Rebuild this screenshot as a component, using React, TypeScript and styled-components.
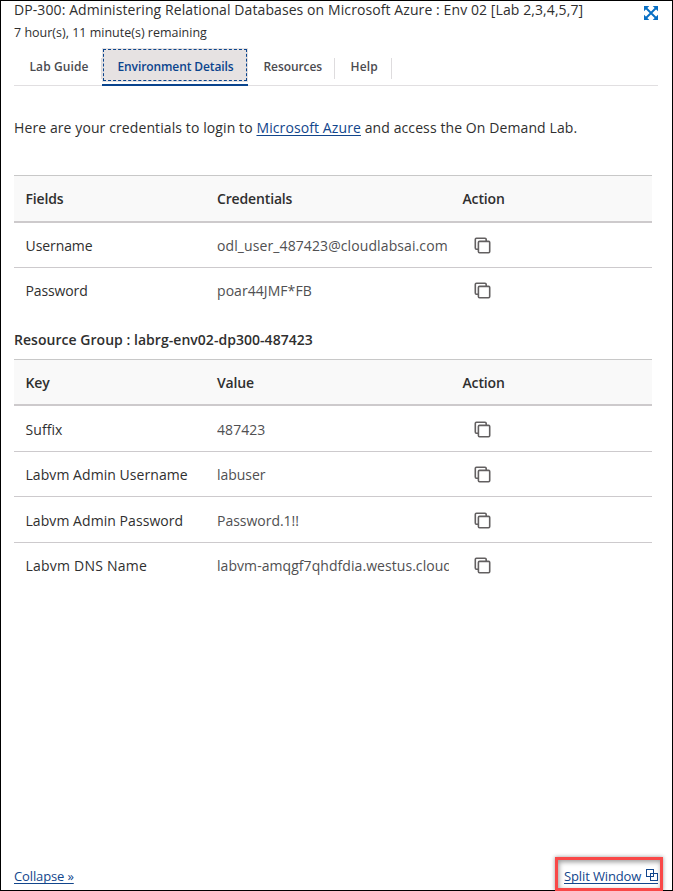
import React from "react";
import styled, { createGlobalStyle, css } from "styled-components";

const GlobalStyle = createGlobalStyle`
  *, *::before, *::after { box-sizing: border-box; }
  body { margin: 0; background: #fff; }
`;

const Frame = styled.div`
  display: flex;
  flex-direction: column;
  width: 673px;
  height: 891px;
  padding: 0 14px 0 13px;
  border: 1px solid #000;
  background: #fff;
  color: #2f2f2f;
  font-family: "Open Sans", "Segoe UI", sans-serif;
  font-size: 14px;
  letter-spacing: 0.09px;
  white-space: nowrap;
`;

const Header = styled.header`
  display: flex;
  justify-content: space-between;
  height: 47px;
`;

const Title = styled.h1`
  margin: 0;
  font-size: 14px;
  font-weight: 400;
  line-height: 18px;
`;

const Remaining = styled.p`
  margin: 5px 0 0;
  font-size: 12.5px;
  line-height: 17px;
  letter-spacing: 0;
`;

const ExpandButton = styled.button`
  align-self: flex-start;
  width: 16px;
  height: 16px;
  margin: 4px -1px 0 0;
  padding: 0;
  border: 0;
  background: none;
  svg { display: block; }
`;

const Tabs = styled.nav`
  display: flex;
  height: 38px;
  box-shadow: inset 0 -1px #e1dfe1;
`;

const Tab = styled.button<{ $width: number; $spacing: number; $active?: boolean }>`
  display: flex;
  flex: none;
  align-items: flex-start;
  width: ${(p) => p.$width}px;
  height: 38px;
  padding: 10px 0 0 15.5px;
  border: 0;
  background: linear-gradient(#dedcde, #dedcde) right 10px / 1px 21px no-repeat;
  color: #4b4b50;
  font: 600 12px/17px "Open Sans", sans-serif;
  letter-spacing: ${(p) => p.$spacing}px;
  ${(p) =>
    p.$active &&
    css`
      padding: 0;
      background: none;
      border-bottom: 2px solid #0a448d;
      color: #0a448d;
    `}
`;

const FocusedLabel = styled.span`
  width: 146px;
  height: 34px;
  padding: 10px 0 0 15.5px;
  background: #e6e2e2;
  outline: 1px dashed #0a448d;
  outline-offset: -2px;
  text-align: left;
`;

const Intro = styled.p`
  margin: 32px 0 38px;
  line-height: 19px;
  letter-spacing: 0.1px;
`;

const Link = styled.a`
  color: #12468c;
  text-decoration: underline;
  text-decoration-thickness: 1px;
  text-underline-offset: 2px;
  text-decoration-skip-ink: none;
`;

const Table = styled.section`
  width: 638px;
  border-top: 1px solid #c8c8c8;
`;

const Row = styled.div<{ $height: number }>`
  display: grid;
  grid-template-columns: 191.5px 245.5px 1fr;
  align-items: center;
  height: ${(p) => p.$height}px;
  padding: ${(p) => (p.$height > 45 ? 1 : 0)}px 0 0 11.5px;
  border-bottom: 1px solid #cdcacd;
  &:last-child { border-bottom-color: transparent; }
`;

const HeadRow = styled(Row)`
  padding-top: 0;
  border-bottom: 2px solid #cdcacc;
  background: #f9f9f9;
  font-weight: 600;
  letter-spacing: -0.15px;
`;

const Label = styled.span<{ $spacing?: number }>`
  letter-spacing: ${(p) => p.$spacing ?? 0.06}px;
`;

const Value = styled.span<{ $spacing?: number }>`
  width: 232px;
  overflow: hidden;
  color: #505052;
  letter-spacing: ${(p) => p.$spacing ?? 0.06}px;
`;

const CopyButton = styled.button`
  width: 17px;
  height: 17px;
  margin: 0 0 0 11px;
  padding: 0;
  border: 0;
  background: none;
  svg { display: block; }
`;

const GroupHeading = styled.h2`
  margin: 17px 0 9px;
  font-size: 14px;
  font-weight: 600;
  line-height: 20px;
  letter-spacing: 0.035px;
`;

const Footer = styled.footer`
  display: flex;
  align-items: flex-end;
  justify-content: space-between;
  margin: auto -5px -1px 0;
`;

const FooterLink = styled(Link)`
  font-size: 13px;
  line-height: 18px;
  letter-spacing: -0.13px;
`;

const CollapseLink = styled(FooterLink)`
  margin-bottom: 6px;
`;

const Callout = styled.div`
  width: 108px;
  height: 34px;
  padding: 7px 0 0 6px;
  border: 3px solid #f94848;
  box-shadow: 0 0 4px rgba(0, 0, 0, 0.4), inset 1px 2px 5px rgba(0, 0, 0, 0.4);
`;

const SplitLink = styled(FooterLink)`
  display: flex;
  width: 94px;
  height: 17px;
  border-bottom: 1px solid #12468c;
  text-decoration: none;
  svg { margin: 2px 0 0 5px; flex: none; }
`;

const ExpandIcon = () => (
  <svg width="16" height="16" viewBox="0 0 16 16" fill="#086fc4">
    <path d="M1 1h5.3L1 6.3zM15 1v5.3L9.7 1zM15 15H9.7L15 9.7zM1 15V9.7L6.3 15z" />
    <path d="M2.5 2.5l11 11M13.5 2.5l-11 11" stroke="#086fc4" strokeWidth="1.9" />
  </svg>
);

const CopyIcon = () => (
  <svg width="17" height="17" viewBox="0 0 17 17" fill="none" stroke="#636061" strokeWidth="1.6">
    <path d="M4 12.2H2.4Q1.3 12.2 1.3 11V2.4Q1.3 1.3 2.4 1.3H11Q12.2 1.3 12.2 2.4V4" />
    <rect x="4.4" y="4.4" width="11.3" height="11.3" rx="1.1" />
  </svg>
);

const SplitIcon = () => (
  <svg width="12" height="12" viewBox="0 0 12 12" fill="none" stroke="#12468c" shapeRendering="crispEdges">
    <path d="M.5.5h7v7h-7zM4.5 4.5h7v7h-7z" />
  </svg>
);

type Entry = { label: string; value: string; height: number; labelSpacing?: number; valueSpacing?: number };

const credentials: Entry[] = [
  { label: "Username", value: "odl_user_487423@cloudlabsai.com", height: 45, labelSpacing: -0.08, valueSpacing: 0.1 },
  { label: "Password", value: "poar44JMF*FB", height: 45, labelSpacing: -0.13 },
];

const resources: Entry[] = [
  { label: "Suffix", value: "487423", height: 46 },
  { label: "Labvm Admin Username", value: "labuser", height: 45, valueSpacing: -0.03 },
  { label: "Labvm Admin Password", value: "Password.1!!", height: 46, valueSpacing: -0.02 },
  { label: "Labvm DNS Name", value: "labvm-amqgf7qhdfdia.westus.cloudapp.azure.com", height: 45, labelSpacing: 0.22, valueSpacing: 0.06 },
];

const DataTable = ({ heads, entries, headHeight }: { heads: string[]; entries: Entry[]; headHeight: number }) => (
  <Table>
    <HeadRow $height={headHeight}>
      {heads.map((head) => (
        <span key={head}>{head}</span>
      ))}
    </HeadRow>
    {entries.map((entry) => (
      <Row key={entry.label} $height={entry.height}>
        <Label $spacing={entry.labelSpacing}>{entry.label}</Label>
        <Value $spacing={entry.valueSpacing}>{entry.value}</Value>
        <CopyButton aria-label="Copy">
          <CopyIcon />
        </CopyButton>
      </Row>
    ))}
  </Table>
);

export default function App() {
  return (
    <>
      <GlobalStyle />
      <Frame>
        <Header>
          <div>
            <Title>DP-300: Administering Relational Databases on Microsoft Azure : Env 02 [Lab 2,3,4,5,7]</Title>
            <Remaining>7 hour(s), 11 minute(s) remaining</Remaining>
          </div>
          <ExpandButton aria-label="Expand">
            <ExpandIcon />
          </ExpandButton>
        </Header>
        <Tabs>
          <Tab $width={88} $spacing={0.09}>Lab Guide</Tab>
          <Tab $width={146} $spacing={-0.1} $active>
            <FocusedLabel>Environment Details</FocusedLabel>
          </Tab>
          <Tab $width={87} $spacing={-0.08}>Resources</Tab>
          <Tab $width={57} $spacing={0.15}>Help</Tab>
        </Tabs>
        <Intro>
          Here are your credentials to login to <Link>Microsoft Azure</Link> and access the On Demand Lab.
        </Intro>
        <DataTable heads={["Fields", "Credentials", "Action"]} entries={credentials} headHeight={47} />
        <GroupHeading>Resource Group : labrg-env02-dp300-487423</GroupHeading>
        <DataTable heads={["Key", "Value", "Action"]} entries={resources} headHeight={46} />
        <Footer>
          <CollapseLink>Collapse »</CollapseLink>
          <Callout>
            <SplitLink>
              Split Window
              <SplitIcon />
            </SplitLink>
          </Callout>
        </Footer>
      </Frame>
    </>
  );
}
